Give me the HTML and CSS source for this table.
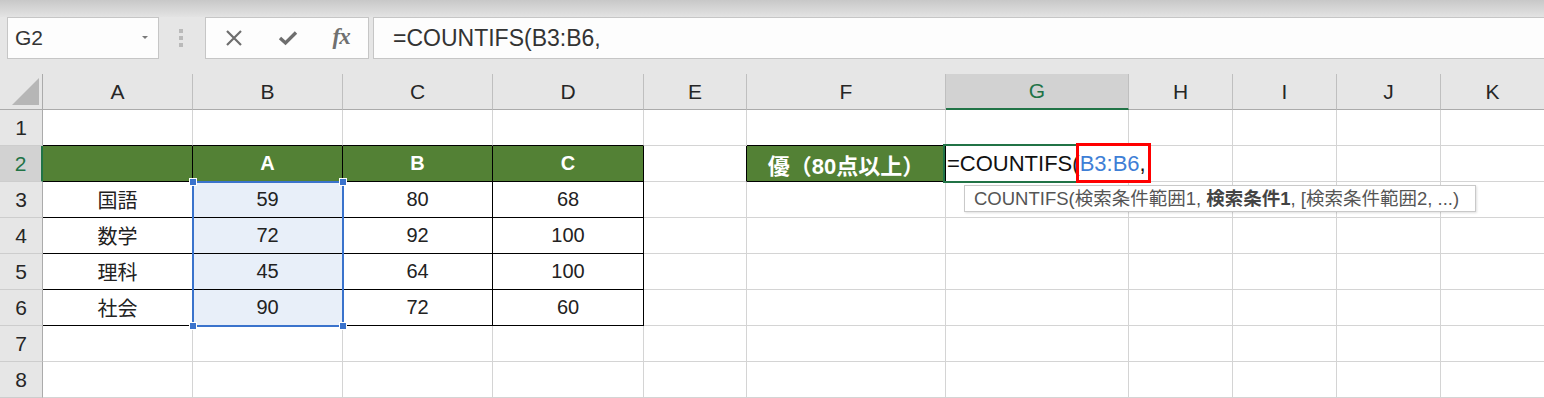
FILE: index.html
```html
<!DOCTYPE html>
<html lang="ja">
<head>
<meta charset="utf-8">
<title>COUNTIFS</title>
<link rel="stylesheet" href="styles.css">
</head>
<body>
<div class="app">
  <div class="topbar"></div>
  <div class="fbar">
    <div class="namebox"><span class="nb-text">G2</span><span class="caret"></span></div>
    <div class="sep"><i></i><i></i><i></i></div>
    <div class="fxbox">
      <span class="ic"><svg width="18" height="18" viewBox="0 0 18 18"><path d="M2 2 L16 16 M16 2 L2 16" stroke="#6e6e6e" stroke-width="2.2" fill="none"/></svg></span>
      <span class="ic"><svg width="20" height="16" viewBox="0 0 20 16"><path d="M2 8 L7.5 13 L18 2.5" stroke="#6e6e6e" stroke-width="3.4" fill="none" stroke-linejoin="miter"/></svg></span>
      <span class="ic fx">fx</span>
    </div>
    <div class="finput">=COUNTIFS(B3:B6,</div>
  </div>
  <div class="gap"></div>
  <div class="sheet">
    <!-- header row -->
    <div class="corner"><span class="tri"></span></div>
    <div class="h">A</div><div class="h">B</div><div class="h">C</div><div class="h">D</div><div class="h">E</div><div class="h">F</div><div class="h hsel">G</div><div class="h">H</div><div class="h">I</div><div class="h">J</div><div class="h">K</div>
    <!-- row 1 -->
    <div class="r">1</div>
    <div class="c bb"></div><div class="c bb"></div><div class="c bb"></div><div class="c bb"></div><div class="c"></div><div class="c bb"></div><div class="c"></div><div class="c"></div><div class="c"></div><div class="c"></div><div class="c"></div>
    <!-- row 2 -->
    <div class="r rsel">2</div>
    <div class="c g br bb"></div><div class="c g br bb">A</div><div class="c g br bb">B</div><div class="c g br bb">C</div><div class="c br"></div><div class="c g br bb big">優（80点以上）</div>
    <div class="c active"><span class="ftext">=COUNTIFS<span class="par">(</span><span class="ref">B3:B6</span>,</span></div>
    <div class="c"></div><div class="c"></div><div class="c"></div><div class="c"></div>
    <!-- row 3 -->
    <div class="r">3</div>
    <div class="c br bb">国語</div><div class="c br bb sel">59</div><div class="c br bb">80</div><div class="c br bb">68</div><div class="c"></div><div class="c"></div><div class="c"></div><div class="c"></div><div class="c"></div><div class="c"></div><div class="c"></div>
    <!-- row 4 -->
    <div class="r">4</div>
    <div class="c br bb">数学</div><div class="c br bb sel">72</div><div class="c br bb">92</div><div class="c br bb">100</div><div class="c"></div><div class="c"></div><div class="c"></div><div class="c"></div><div class="c"></div><div class="c"></div><div class="c"></div>
    <!-- row 5 -->
    <div class="r">5</div>
    <div class="c br bb">理科</div><div class="c br bb sel">45</div><div class="c br bb">64</div><div class="c br bb">100</div><div class="c"></div><div class="c"></div><div class="c"></div><div class="c"></div><div class="c"></div><div class="c"></div><div class="c"></div>
    <!-- row 6 -->
    <div class="r">6</div>
    <div class="c br bb">社会</div><div class="c br bb sel">90</div><div class="c br bb">72</div><div class="c br bb">60</div><div class="c"></div><div class="c"></div><div class="c"></div><div class="c"></div><div class="c"></div><div class="c"></div><div class="c"></div>
    <!-- row 7 -->
    <div class="r">7</div>
    <div class="c"></div><div class="c"></div><div class="c"></div><div class="c"></div><div class="c"></div><div class="c"></div><div class="c"></div><div class="c"></div><div class="c"></div><div class="c"></div><div class="c"></div>
    <!-- row 8 -->
    <div class="r">8</div>
    <div class="c"></div><div class="c"></div><div class="c"></div><div class="c"></div><div class="c"></div><div class="c"></div><div class="c"></div><div class="c"></div><div class="c"></div><div class="c"></div><div class="c"></div>

    <!-- overlays -->
    <div class="selbox"><i class="hd tl"></i><i class="hd tr"></i><i class="hd bl"></i><i class="hd br2"></i></div>
    <div class="activebox"></div>
    <div class="redbox"></div>
    <div class="tip">COUNTIFS(検索条件範囲1, <b>検索条件1</b>, [検索条件範囲2, ...)</div>
  </div>
</div>
</body>
</html>
```

FILE: styles.css
```css
* { box-sizing: border-box; }
html, body { margin: 0; padding: 0; }
body {
  width: 1544px;
  height: 398px;
  overflow: hidden;
  background: #e6e6e6;
  font-family: "Liberation Sans", "Noto Sans CJK JP", sans-serif;
  color: #222;
}
.app { width: 1544px; height: 398px; overflow: hidden; }

.topbar {
  height: 17px;
  background: linear-gradient(#c8c8c8, #e3e3e3);
}

.fbar {
  height: 42px;
  display: flex;
  padding-left: 7px;
  background: #e6e6e6;
}
.namebox {
  width: 152px;
  height: 42px;
  background: #fdfdfd;
  border: 1px solid #c6c6c6;
  display: flex;
  align-items: center;
  padding-left: 7px;
  position: relative;
}
.nb-text { font-size: 21px; color: #333; }
.caret {
  position: absolute;
  left: 134px;
  top: 18px;
  width: 0; height: 0;
  border-left: 3.5px solid transparent;
  border-right: 3.5px solid transparent;
  border-top: 3.5px solid #7a7a7a;
}
.sep {
  width: 46px;
  display: flex;
  flex-direction: column;
  justify-content: center;
  gap: 3px;
  padding-left: 20px;
}
.sep i {
  display: block;
  width: 4px;
  height: 4px;
  background: #bababa;
}
.fxbox {
  width: 164px;
  height: 42px;
  background: #fdfdfd;
  border: 1px solid #c6c6c6;
  display: flex;
  align-items: center;
  padding-left: 1px;
  margin-right: 4px;
}
.ic {
  width: 54px;
  display: flex;
  justify-content: center;
  align-items: center;
}
.fx {
  font-family: "Liberation Serif", serif;
  font-style: italic;
  font-weight: bold;
  font-size: 23px;
  color: #707070;
  letter-spacing: -1px;
  padding-bottom: 2px;
}
.finput {
  flex: 1;
  height: 42px;
  background: #fdfdfd;
  border: 1px solid #c6c6c6;
  border-right: none;
  display: flex;
  align-items: center;
  padding-left: 19px;
  font-size: 23px;
  color: #333;
}

.gap { height: 15px; }

.sheet {
  position: relative;
  display: grid;
  grid-template-columns: 43px 150px 150px 150px 151px 103px 199px 183px 104px 104px 104px 104px;
  grid-auto-rows: 36px;
  background: #fff;
}

.corner {
  background: #e6e6e6;
  border-right: 1px solid #ababab;
  border-bottom: 1px solid #ababab;
  position: relative;
}
.tri {
  position: absolute;
  left: 12px;
  top: 4px;
  width: 0; height: 0;
  border-left: 27px solid transparent;
  border-bottom: 27px solid #b6b6b6;
}

.h {
  background: #e6e6e6;
  border-right: 1px solid #bfbfbf;
  border-bottom: 1px solid #ababab;
  display: flex;
  align-items: center;
  justify-content: center;
  font-size: 21px;
  color: #262626;
}
.hsel {
  background: #d2d2d2;
  color: #217346;
  border-bottom: 2px solid #217346;
}
.r {
  background: #e6e6e6;
  border-right: 1px solid #ababab;
  border-bottom: 1px solid #cdcdcd;
  display: flex;
  align-items: center;
  justify-content: center;
  font-size: 21px;
  color: #262626;
}
.rsel {
  background: #d2d2d2;
  color: #217346;
  border-right: 2px solid #217346;
}

.c {
  background: #fff;
  border-right: 1px solid #d4d4d4;
  border-bottom: 1px solid #d4d4d4;
  display: flex;
  align-items: center;
  justify-content: center;
  font-size: 20px;
  color: #222;
  white-space: nowrap;
}
.bb { border-bottom-color: #000; }
.br { border-right-color: #000; }
.g {
  background: #538135;
  color: #fff;
  font-weight: bold;
}
.big { font-size: 22px; }
.sel { background: #e8eff9; }

.active {
  position: relative;
  z-index: 3;
  justify-content: flex-start;
  padding-left: 1px;
  border-right: none;
  overflow: visible;
}
.ftext { font-size: 22px; color: #111; }
.par { color: #222; }
.ref { color: #3f7fd6; }

.selbox {
  position: absolute;
  left: 192px;
  top: 107px;
  width: 152px;
  height: 146px;
  border: 2px solid #3a73cc;
  z-index: 4;
}
.hd {
  position: absolute;
  width: 8px;
  height: 8px;
  background: #3a73cc;
  border: 1px solid #fff;
}
.hd.tl { left: -5px; top: -5px; }
.hd.tr { right: -5px; top: -5px; }
.hd.bl { left: -5px; bottom: -5px; }
.hd.br2 { right: -5px; bottom: -5px; }

.activebox {
  position: absolute;
  left: 943px;
  top: 70px;
  width: 140px;
  height: 39px;
  border: 2px solid #217346;
  border-right: none;
  z-index: 4;
}
.redbox {
  position: absolute;
  left: 1076px;
  top: 69px;
  width: 75px;
  height: 40px;
  border: 3px solid #ff0000;
  z-index: 5;
}
.tip {
  position: absolute;
  left: 964px;
  top: 111px;
  width: 512px;
  height: 27px;
  background: #fff;
  border: 1px solid #c9c9c9;
  box-shadow: 1px 1px 2px rgba(0,0,0,0.12);
  font-size: 18.5px;
  color: #555;
  line-height: 25px;
  padding-left: 9px;
  white-space: nowrap;
  z-index: 6;
}
.tip b { color: #444; }
```
